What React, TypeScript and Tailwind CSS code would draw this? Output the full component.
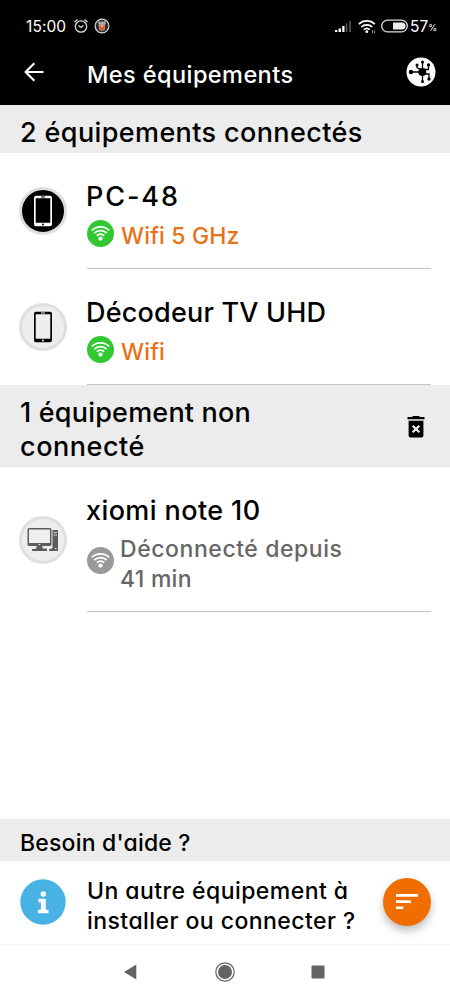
/**
 * App.tsx
 *
 * "Mes équipements" screen: devices known to the home network.
 *
 * Sections:
 *  - Status bar + title bar
 *  - Connected devices
 *  - Disconnected devices
 *  - Help entry with the filter button
 *  - System navigation bar
 */

import type { ReactNode } from 'react'

function PhoneIcon() {
  return (
    <svg width="20" height="32" viewBox="0 0 20 32" fill="currentColor">
      <path
        fillRule="evenodd"
        d="M3 .8h14a2 2 0 0 1 2 2v26.4a2 2 0 0 1-2 2H3a2 2 0 0 1-2-2V2.800a2 2 0 0 1 2-2ZM2.700 3.300v24.400h14.600V3.300ZM8 1.600v.9h4v-.9Zm2 26.900a1 1 0 1 0 0 2 1 1 0 0 0 0-2Z"
      />
    </svg>
  )
}

function ComputerIcon() {
  return (
    <svg width="32" height="26" viewBox="0 0 32 26" fill="#5c5c5c">
      <path
        fillRule="evenodd"
        d="M2 1h21a1.500 1.500 0 0 1 1.500 1.500v15A1.500 1.500 0 0 1 23 19H2a1.500 1.500 0 0 1-1.500-1.500v-15A1.500 1.500 0 0 1 2 1Zm0 1.500V16h21V2.500Z"
      />
      <circle cx="12.500" cy="17.500" r=".8" fill="#eee" />
      <path d="M9.500 19h6v2.500H20V24H5v-1.700l4.500-.8Z" />
      <path d="M25.500 3H31v21h-9v-1.500l3.500-1.500Z" />
      <path d="M26.500 5.500H30M26.500 8H30" stroke="#eee" strokeWidth=".8" />
      <circle cx="28.700" cy="21.500" r=".8" fill="#eee" />
    </svg>
  )
}

function WifiBadge({ online }: { online: boolean }) {
  return (
    <svg
      className={online ? '-mt-[6px] shrink-0 text-[#32c832]' : '-mt-[8px] shrink-0 text-[#999]'}
      width="27"
      height="27"
      viewBox="0 0 28 28"
    >
      <circle cx="14" cy="14" r="14" fill="currentColor" />
      <g fill="none" stroke="#fff" strokeWidth="1.900">
        <path d="M5 10.800a12.800 12.800 0 0 1 18 0" />
        <path d="M7.600 13.600a9.200 9.200 0 0 1 12.800 0" />
        <path d="M10.200 16.300a5.500 5.500 0 0 1 7.600 0" />
      </g>
      <circle cx="14" cy="19.200" r="2.200" fill="#fff" />
    </svg>
  )
}

function NetworkIcon() {
  return (
    <svg width="30" height="30" viewBox="0 0 30 30">
      <circle cx="15" cy="15" r="14.500" fill="#fff" />
      <g fill="none" stroke="#000" strokeWidth="1.300">
        <path d="M5 15h11M16.500 15V5M16.500 15v9.500M15.500 13l-4.500-2.500V8M18 12.500h4.500V8M18 17h5v5" />
      </g>
      <circle cx="16.300" cy="15" r="4" />
      <circle cx="5" cy="15" r="2.200" />
      <circle cx="16.500" cy="5" r="1.500" />
      <circle cx="11" cy="8" r="1.500" />
      <circle cx="22.500" cy="8" r="1.700" />
      <circle cx="16.500" cy="24.500" r="1.500" />
      <circle cx="23" cy="22" r="1.700" />
    </svg>
  )
}

function StatusBar() {
  return (
    <div className="flex h-[50px] items-center pt-[2px] pr-[13px] pl-[26px]">
      <span className="mt-px w-[47px] text-[15.5px] tracking-[0.1px]">15:00</span>
      <svg width="16" height="16" viewBox="0 0 16 16" fill="none" stroke="#ddd" strokeWidth="1.300">
        <circle cx="8" cy="8.500" r="5.700" />
        <path d="m5.500 7.500 2.500 2 2.500-2M1.500 4 4.500 1.500M14.500 4l-3-2.500" />
      </svg>
      <svg className="ml-[5px]" width="16" height="16" viewBox="0 0 16 16">
        <circle cx="8" cy="8" r="6.900" fill="#292b35" stroke="#ddd" strokeWidth="1.200" />
        <path d="M4.500 3.500h7l-.7 8.500-2.800 1-2.800-1Z" fill="#c98770" />
        <path d="M4.500 3 7 5.500 11.500 3v3l-7 .5Z" fill="#9bb7c9" />
        <path d="m5.500 8 2.500 1 2.500-1-1 4h-3Z" fill="#d65327" />
        <path d="M7 7.500h2l-1 2Z" fill="#ffe5b5" />
      </svg>

      <svg className="ml-auto" width="17" height="13" viewBox="0 0 17 13">
        <path d="M0 12v-2h2.400v2ZM3.600 12V8.500H6V12ZM7.200 12V6h2.300v6Z" fill="#fff" />
        <path d="M10.800 12V3.500h1.600V12ZM14.300 12V1h1.600v11Z" fill="#555" />
      </svg>
      <svg className="ml-[6px]" width="18" height="15" viewBox="0 0 18 15" fill="none" stroke="#fff" strokeWidth="1.700">
        <path d="M.8 5.200a11.500 11.500 0 0 1 16 0M3.300 8a8 8 0 0 1 11 0M5.800 10.700a4.500 4.500 0 0 1 6 0" />
        <circle cx="8.800" cy="12.700" r="1.400" fill="#fff" stroke="none" />
        <path d="M14.500 11v3M16.500 11.500v3" stroke="#aaa" strokeWidth=".8" />
      </svg>
      <svg className="-mt-px ml-[5px]" width="27" height="14" viewBox="0 0 27 14">
        <rect x=".7" y="1.200" width="25.600" height="11.600" rx="5.800" fill="none" stroke="#ddd" strokeWidth="1.300" />
        <path d="M12 3.500h9a3.500 3.500 0 0 1 0 7H12Z" fill="#eee" />
      </svg>
      <span className="mt-px ml-[2px] text-[15.5px]">57</span>
      <span className="mt-[4px] text-[9px]">%</span>
    </div>
  )
}

function SectionTitle({ children }: { children: ReactNode }) {
  return <h2 className="text-[27px] leading-[34px] font-[450] tracking-[0.38px]">{children}</h2>
}

type DeviceRowProps = {
  name: string
  status: ReactNode
  online: boolean
  active?: boolean
  icon: ReactNode
  nameClass?: string
}

function DeviceRow({ name, status, online, active = false, icon, nameClass = 'tracking-[0.2px]' }: DeviceRowProps) {
  return (
    <div className="flex items-center pr-[19px] pl-[19px]">
      <div
        className={
          active
            ? 'flex size-12 shrink-0 items-center justify-center rounded-full border-[3px] border-[#dedede] bg-black text-white'
            : 'flex size-12 shrink-0 items-center justify-center rounded-full border-[3px] border-[#dfdfdf] bg-[#eee] text-black'
        }
      >
        {icon}
      </div>
      <div className="ml-5 flex-1 border-b border-[#c4c4c4] pt-[27px] pb-[17px]">
        <h3 className={`-ml-px text-[27px] leading-[34px] font-[450] ${nameClass}`}>{name}</h3>
        <div className="mt-[7px] flex items-center">
          <WifiBadge online={online} />
          <p
            className={
              online
                ? 'ml-[7px] text-[23px] leading-[30px] font-medium tracking-[0.15px] text-[#e87316]'
                : 'ml-[6px] text-[23px] leading-[29.5px] font-medium text-[#666]'
            }
          >
            {status}
          </p>
        </div>
      </div>
    </div>
  )
}

export default function App() {
  return (
    <div className="flex h-[999px] w-[450px] flex-col overflow-hidden bg-white font-['Inter',sans-serif] text-black [font-feature-settings:'cv11']">
      <header className="h-[105px] shrink-0 bg-black text-white">
        <StatusBar />
        <div className="flex h-[50px] items-center pr-[14px] pl-[24px]">
          <svg className="-mt-[6px]" width="20" height="20" viewBox="0 0 20 20" fill="none" stroke="#fff" strokeWidth="2.100">
            <path d="M19.500 10H2M10.300 1.300 1.600 10l8.700 8.700" />
          </svg>
          <h1 className="ml-[43px] text-[23.5px] font-medium tracking-[0.42px]">Mes équipements</h1>
          <div className="-mt-[6px] ml-auto">
            <NetworkIcon />
          </div>
        </div>
      </header>

      {/* Connected devices */}
      <div className="flex h-12 shrink-0 items-center bg-[#ececec] px-5 pt-[8px]">
        <SectionTitle>2 équipements connectés</SectionTitle>
      </div>
      <DeviceRow
        name="PC-48"
        nameClass="tracking-[1.9px]"
        status="Wifi 5 GHz"
        online
        active
        icon={<PhoneIcon />}
      />
      <DeviceRow name="Décodeur TV UHD" status="Wifi" online icon={<PhoneIcon />} />

      {/* Disconnected devices */}
      <div className="flex h-[82px] shrink-0 items-center justify-between bg-[#ececec] pr-[25px] pl-5">
        <div className="mt-[8px]">
          <SectionTitle>
            <span className="tracking-[0.2px]">1 équipement non</span>
            <br />
            <span className="tracking-[0.55px]">connecté</span>
          </SectionTitle>
        </div>
        <svg className="mt-px" width="18" height="24" viewBox="0 0 18 24">
          <path d="M.5 2H5l1-1h6l1 1h4.500v2.200H.5ZM1.600 5.800h14.800v14.700a2 2 0 0 1-2 2H3.600a2 2 0 0 1-2-2Z" />
          <path d="m5.700 10.700 6.600 6.600M12.300 10.700l-6.600 6.600" stroke="#eee" strokeWidth="2.200" />
        </svg>
      </div>
      <DeviceRow
        name="xiomi note 10"
        nameClass="tracking-[0.4px]"
        status={
          <>
            <span className="tracking-[0.56px]">Déconnecté depuis</span>
            <br />
            <span className="tracking-[0.25px]">41 min</span>
          </>
        }
        online={false}
        icon={<ComputerIcon />}
      />

      {/* Help */}
      <footer className="mt-auto shrink-0">
        <div className="flex h-[42px] items-center bg-[#ececec] px-5 pt-[6px]">
          <h2 className="text-[23px] font-medium tracking-[0.2px]">Besoin d'aide ?</h2>
        </div>
        <div className="flex h-[84px] items-center border-b border-[#f5f5f5] pr-[19px] pl-5">
          <svg className="-mt-px shrink-0" width="46" height="46" viewBox="0 0 46 46">
            <circle cx="23" cy="23" r="22.700" fill="#49b2e5" />
            <circle cx="23.300" cy="15" r="2.700" fill="#fff" />
            <path d="M18.500 19.800h7.300v11h2.700v3.400H18v-3.400h2.900v-7.600h-2.400Z" fill="#fff" />
          </svg>
          <p className="ml-[21px] pt-[8px] text-[23px] leading-[29.5px] font-medium tracking-[0.45px] whitespace-nowrap">
            Un autre équipement à
            <br />
            installer ou connecter ?
          </p>
          <button className="-mt-px ml-auto flex size-12 shrink-0 items-center justify-center rounded-full bg-[#f06e00] shadow-[0_5px_9px_rgba(0,0,0,0.25)]">
            <svg width="22" height="16" viewBox="0 0 22 16" fill="#fff">
              <path d="M0 0h22v2.700H0ZM0 6.300h15v2.600H0ZM0 12.500h7.300V15H0Z" />
            </svg>
          </button>
        </div>
        <nav className="h-[54px]">
          <svg width="450" height="54" viewBox="0 0 450 54" fill="#636363">
            <path d="m124 27 12.300-7.500v15Z" />
            <circle cx="225" cy="27" r="9.200" fill="none" stroke="#636363" strokeWidth="1.200" />
            <circle cx="225" cy="27" r="7" />
            <rect x="311.500" y="20.500" width="13" height="13" rx="1" />
          </svg>
        </nav>
      </footer>
    </div>
  )
}
